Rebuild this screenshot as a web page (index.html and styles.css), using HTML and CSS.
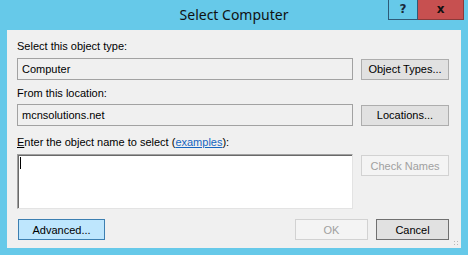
FILE: index.html
```html
<!DOCTYPE html>
<html lang="en">
<head>
    <meta charset="UTF-8">
    <title>Select Computer</title>
    <link rel="stylesheet" href="styles.css">
</head>
<body>
    <div class="window">
        <div class="titlebar">
            <span class="title">Select Computer</span>
            <div class="caption-buttons">
                <span class="help-btn">?</span>
                <span class="close-btn">x</span>
            </div>
        </div>
        <div class="client">
            <div class="label first">Select this object type:</div>
            <div class="row">
                <div class="field">Computer</div>
                <button class="btn">Object Types...</button>
            </div>

            <div class="label second">From this location:</div>
            <div class="row">
                <div class="field">mcnsolutions.net</div>
                <button class="btn">Locations...</button>
            </div>

            <div class="label third"><u>E</u>nter the object name to select (<a href="#" class="link">examples</a>):</div>
            <div class="row top">
                <div class="names"><span class="caret"></span></div>
                <button class="btn" disabled>Check Names</button>
            </div>

            <div class="footer">
                <button class="btn advanced">Advanced...</button>
                <div class="spacer"></div>
                <button class="btn ok" disabled>OK</button>
                <button class="btn cancel">Cancel</button>
            </div>
            <div class="grip"></div>
        </div>
    </div>
</body>
</html>
```

FILE: styles.css
```css
body {
    margin: 0;
    background-color: #66c9e9;
    font-family: "Liberation Sans", Arial, sans-serif;
    font-size: 11px;
    color: #000;
}

.window {
    width: 468px;
    height: 255px;
}

.titlebar {
    position: relative;
    height: 30px;
    text-align: center;
}

.title {
    display: inline-block;
    font-family: "Noto Sans", sans-serif;
    font-size: 14px;
    line-height: 30px;
    color: #111;
}

.caption-buttons {
    position: absolute;
    top: 0;
    left: 388px;
    display: flex;
}

.help-btn,
.close-btn {
    display: block;
    height: 19px;
    line-height: 19px;
    text-align: center;
    font-weight: bold;
    font-size: 12px;
    font-family: "DejaVu Sans", sans-serif;
}

.help-btn {
    width: 28px;
    border: 1px solid #2e5b78;
    border-top: none;
    background-color: #66c9e9;
    color: #1a2a3a;
}

.close-btn {
    width: 45px;
    border: 1px solid #8a3a3a;
    border-top: none;
    border-left: none;
    background-color: #c75050;
    color: #111;
}

.client {
    position: relative;
    margin-left: 7px;
    width: 444px;
    height: 218px;
    padding-left: 10px;
    background-color: #f0f0f0;
}

.label {
    height: 13px;
    line-height: 13px;
}

.label.first {
    padding-top: 10px;
    margin-bottom: 5px;
}

.label.second {
    margin-top: 7px;
    margin-bottom: 4px;
}

.label.third {
    margin-top: 10px;
    margin-bottom: 5px;
}

.link {
    color: #1565c0;
}

.row {
    display: flex;
    align-items: center;
    gap: 8px;
}

.row.top {
    align-items: flex-start;
}

.field {
    box-sizing: border-box;
    width: 336px;
    height: 22px;
    line-height: 20px;
    padding-left: 4px;
    border: 1px solid #a2a2a2;
    background-color: #f0f0f0;
}

.names {
    box-sizing: border-box;
    width: 336px;
    height: 55px;
    padding: 2px 0 0 2px;
    background-color: #fff;
    border-top: 1px solid #a0a0a0;
    border-left: 1px solid #a0a0a0;
    border-right: 1px solid #e3e3e3;
    border-bottom: 1px solid #e3e3e3;
    box-shadow: inset 1px 1px 0 #696969;
}

.caret {
    display: block;
    width: 0;
    height: 12px;
    border-left: 1px solid #000;
}

.btn {
    box-sizing: border-box;
    width: 88px;
    height: 21px;
    padding: 0;
    border: 1px solid #adadad;
    background-color: #e1e1e1;
    font-family: "Liberation Sans", Arial, sans-serif;
    font-size: 11px;
    color: #000;
}

.row.top .btn {
    margin-top: 1px;
}

.btn:disabled {
    background-color: #f4f4f4;
    border-color: #d2d2d2;
    color: #a0a0a0;
}

.footer {
    display: flex;
    gap: 8px;
    margin-top: 10px;
}

.spacer {
    flex: 1;
}

.advanced {
    margin-left: 1px;
    width: 87px;
    background-color: #bee6fd;
    border-color: #3c7fb1;
}

.ok,
.cancel {
    width: 73px;
}

.cancel {
    margin-right: 12px;
    border-color: #707070;
    background-color: #e1e1e1;
}

.grip {
    position: absolute;
    right: 2px;
    bottom: 2px;
    width: 6px;
    height: 6px;
    background-image: radial-gradient(circle, #b8b8b8 0.8px, transparent 1px);
    background-size: 3px 3px;
}
```
